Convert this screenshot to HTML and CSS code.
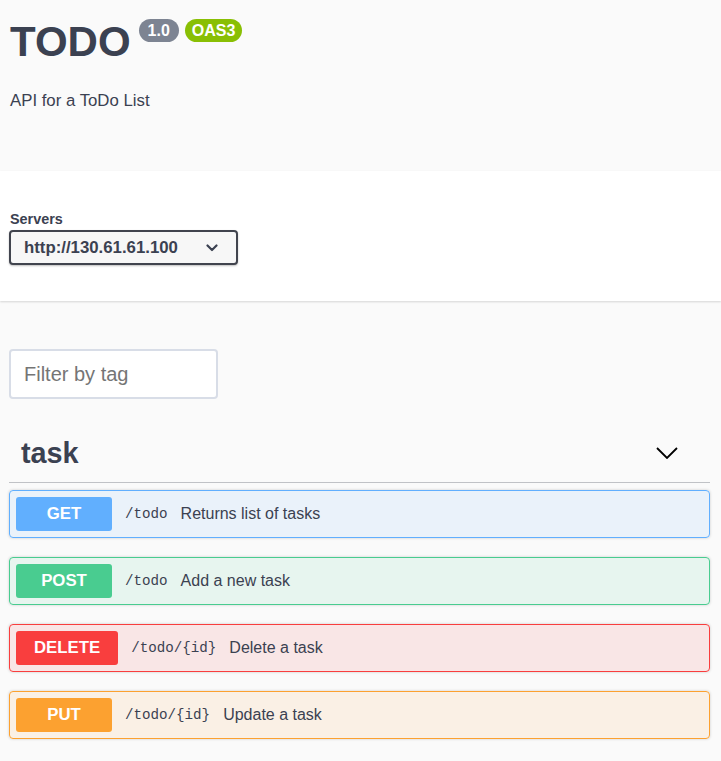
FILE: index.html
```html
<!DOCTYPE html>
<html lang="en">
<head>
<meta charset="utf-8">
<title>TODO</title>
<link rel="stylesheet" href="styles.css">
</head>
<body>
<section class="info">
  <h1 class="title">TODO<span class="badge badge-version">1.0</span><span class="badge badge-oas">OAS3</span></h1>
  <p class="description">API for a ToDo List</p>
</section>
<section class="scheme">
  <div class="scheme-inner">
    <div class="servers-label">Servers</div>
    <div class="select">
      <span class="select-text">http://130.61.61.100</span>
      <svg class="select-arrow" width="12" height="8" viewBox="0 0 12 8"><path d="M1.5 1.5 L6 6 L10.5 1.5" fill="none" stroke="#3b4151" stroke-width="2.2" stroke-linecap="round" stroke-linejoin="round"/></svg>
    </div>
  </div>
</section>
<main class="wrapper">
  <div class="filter"><input class="filter-input" type="text" placeholder="Filter by tag"></div>
  <div class="tag-header">
    <h3 class="tag-title">task</h3>
    <svg class="tag-arrow" width="22" height="12" viewBox="0 0 22 12"><path d="M1 1 L11 11 L21 1" fill="none" stroke="#000" stroke-width="1.8"/></svg>
  </div>
  <div class="opblock get">
    <span class="method">GET</span>
    <span class="path">/todo</span>
    <span class="summary">Returns list of tasks</span>
  </div>
  <div class="opblock post">
    <span class="method">POST</span>
    <span class="path">/todo</span>
    <span class="summary">Add a new task</span>
  </div>
  <div class="opblock delete">
    <span class="method">DELETE</span>
    <span class="path">/todo/{id}</span>
    <span class="summary">Delete a task</span>
  </div>
  <div class="opblock put">
    <span class="method">PUT</span>
    <span class="path">/todo/{id}</span>
    <span class="summary">Update a task</span>
  </div>
</main>
</body>
</html>
```
FILE: styles.css
```css
html, body {
  margin: 0;
  padding: 0;
}
body {
  background: #fafafa;
  font-family: "Liberation Sans", Arial, sans-serif;
  color: #3b4151;
}
.info {
  box-sizing: border-box;
  height: 171px;
  padding: 17px 10px 0;
}
.title {
  display: flex;
  align-items: flex-start;
  margin: 0;
  font-size: 42px;
  line-height: 50px;
  font-weight: 700;
  color: #3b4151;
}
.badge {
  display: inline-block;
  margin-top: 2px;
  height: 23px;
  line-height: 23px;
  border-radius: 12px;
  font-size: 16px;
  font-weight: 700;
  color: #fff;
}
.badge-version {
  margin-left: 8px;
  padding: 0 9px;
  background: #7d8492;
}
.badge-oas {
  margin-left: 6px;
  padding: 0 7px;
  background: #89bf04;
}
.description {
  margin: 24px 0 0;
  font-size: 16.8px;
  line-height: 20px;
}
.scheme {
  box-sizing: border-box;
  height: 130px;
  background: #fff;
  box-shadow: 0 1px 2px 0 rgba(0, 0, 0, 0.15);
  padding: 40px 9px 0;
  position: relative;
}
.servers-label {
  font-size: 14.4px;
  line-height: 17px;
  font-weight: 700;
  margin-left: 1px;
}
.select {
  box-sizing: border-box;
  margin-top: 2px;
  width: 229px;
  height: 35px;
  border: 2px solid #41444e;
  border-radius: 4px;
  background: #f7f7f7;
  box-shadow: 0 1px 2px 0 rgba(0, 0, 0, 0.25);
  display: flex;
  align-items: center;
  justify-content: space-between;
  padding: 0 18px 0 13px;
}
.select-text {
  font-size: 16.8px;
  font-weight: 700;
  line-height: 20px;
  color: #3b4151;
}
.select-arrow {
  display: block;
}
.wrapper {
  padding: 48px 11px 30px 9px;
}
.filter-input {
  box-sizing: border-box;
  display: block;
  width: 209px;
  height: 50px;
  margin: 0;
  border: 2px solid #d8dde7;
  border-radius: 4px;
  background: #fff;
  padding: 0 13px;
  font-family: "Liberation Sans", Arial, sans-serif;
  font-size: 20px;
  color: #3b4151;
  outline: none;
}
.filter-input::placeholder {
  color: #757575;
}
.tag-header {
  margin-top: 36px;
  display: flex;
  align-items: center;
  justify-content: space-between;
  padding: 0 32px 11px 12px;
  border-bottom: 1px solid rgba(59, 65, 81, 0.3);
}
.tag-title {
  margin: 0;
  font-size: 28.8px;
  line-height: 36px;
  font-weight: 700;
  color: #3b4151;
}
.tag-arrow {
  display: block;
}
.opblock {
  box-sizing: border-box;
  height: 48px;
  margin-top: 7px;
  margin-bottom: 19px;
  border: 1px solid;
  border-radius: 4px;
  padding: 6px;
  display: flex;
  align-items: center;
  box-shadow: 0 0 3px rgba(0, 0, 0, 0.19);
}
.opblock + .opblock {
  margin-top: 0;
}
.method {
  box-sizing: border-box;
  min-width: 96px;
  height: 34px;
  line-height: 34px;
  padding: 0 18px;
  border-radius: 3px;
  text-align: center;
  color: #fff;
  font-size: 16.8px;
  font-weight: 700;
}
.path {
  margin-left: 13px;
  font-family: "Liberation Mono", "Courier New", monospace;
  font-size: 14.2px;
  font-weight: 400;
  color: #3b4151;
}
.summary {
  margin-left: 13px;
  font-size: 16px;
  color: #3b4151;
}
.get {
  border-color: #61affe;
  background: rgba(97, 175, 254, 0.1);
}
.get .method {
  background: #61affe;
}
.post {
  border-color: #49cc90;
  background: rgba(73, 204, 144, 0.1);
}
.post .method {
  background: #49cc90;
}
.delete {
  border-color: #f93e3e;
  background: rgba(249, 62, 62, 0.1);
}
.delete .method {
  background: #f93e3e;
}
.put {
  border-color: #fca130;
  background: rgba(252, 161, 48, 0.1);
}
.put .method {
  background: #fca130;
}
```
